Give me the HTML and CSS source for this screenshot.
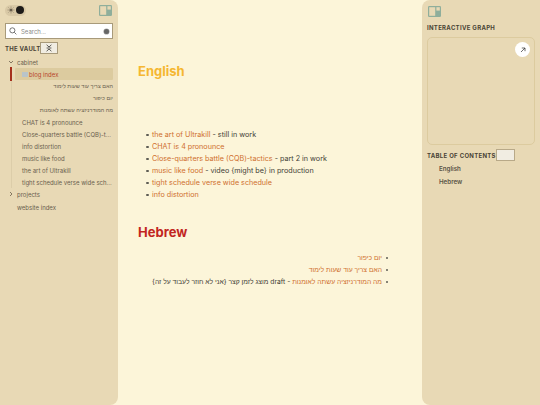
FILE: index.html
```html
<!DOCTYPE html>
<html lang="en">
<head>
<meta charset="utf-8">
<title>Blog index</title>
<link rel="stylesheet" href="styles.css">
</head>
<body>
<div class="page">
  <aside class="left">
    <div class="top-row">
      <div class="theme">
        <svg class="sun" viewBox="0 0 10 10"><circle cx="5" cy="5" r="2" fill="#6b5f4c"/><path d="M5 .8v1.2M5 8v1.2M.8 5H2M8 5h1.2M2 2l.9.9M7.1 7.1l.9.9M2 8l.9-.9M7.1 2.9 8 2" stroke="#6b5f4c" stroke-width=".8"/></svg>
        <span class="moon"></span>
      </div>
      <svg class="layout-icon" viewBox="0 0 13 11"><rect width="13" height="11" rx="1.2" fill="#8fae9b"/><rect x="1.2" y="1.2" width="6" height="8.6" fill="#e8d9b5"/><rect x="8.4" y="1.2" width="3.4" height="3.4" fill="#e8d9b5"/></svg>
    </div>
    <div class="search">
      <svg class="glass" viewBox="0 0 10 10"><circle cx="4.2" cy="4.2" r="3.2" fill="none" stroke="#444" stroke-width=".9"/><path d="m6.6 6.6 2.6 2.6" stroke="#444" stroke-width=".9"/></svg>
      <span class="placeholder">Search...</span>
      <span class="clear"></span>
    </div>
    <div class="vault-row">
      <span class="vault">THE VAULT</span>
      <span class="collapse"><svg viewBox="0 0 10 9"><path d="M2 .5 5 3.2 8 .5M2 8.5 5 5.8 8 8.5M2 4.5h6" fill="none" stroke="#222" stroke-width=".9"/></svg></span>
    </div>
    <nav class="tree">
      <div class="folder"><svg class="chev" viewBox="0 0 6 6"><path d="M1 2l2 2 2-2" fill="none" stroke="#6b5f4c" stroke-width=".8"/></svg><span>cabinet</span></div>
      <div class="children">
        <div class="active"><span class="doc"></span>blog index</div>
        <div class="item he" dir="rtl">האם צריך עוד שעות לימוד</div>
        <div class="item he" dir="rtl">יום כיפור</div>
        <div class="item he" dir="rtl">מה המודרניזציה עשתה לאומנות</div>
        <div class="item">CHAT is 4 pronounce</div>
        <div class="item">Close-quarters battle (CQB)-t...</div>
        <div class="item">info distortion</div>
        <div class="item">music like food</div>
        <div class="item">the art of Ultrakill</div>
        <div class="item">tight schedule verse wide sch...</div>
      </div>
      <div class="folder"><svg class="chev" viewBox="0 0 6 6"><path d="M2 1l2 2-2 2" fill="none" stroke="#6b5f4c" stroke-width=".8"/></svg><span>projects</span></div>
      <div class="folder plain"><span>website index</span></div>
    </nav>
  </aside>

  <main class="center">
    <h2 class="h-en">English</h2>
    <ul class="list-en">
      <li><a>the art of Ultrakill</a> - still in work</li>
      <li><a>CHAT is 4 pronounce</a></li>
      <li><a>Close-quarters battle (CQB)-tactics</a> - part 2 in work</li>
      <li><a>music like food</a> - video {might be} in production</li>
      <li><a>tight schedule verse wide schedule</a></li>
      <li><a>info distortion</a></li>
    </ul>
    <h2 class="h-he">Hebrew</h2>
    <ul class="list-he" dir="rtl">
      <li><a>יום כיפור</a></li>
      <li><a>האם צריך עוד שעות לימוד</a></li>
      <li><a>מה המודרניזציה עשתה לאומנות</a> - draft מוצג לזמן קצר {אני לא חוזר לעבוד על זה}</li>
    </ul>
  </main>

  <aside class="right">
    <svg class="layout-icon" viewBox="0 0 13 11"><rect width="13" height="11" rx="1.2" fill="#8fae9b"/><rect x="1.2" y="1.2" width="6" height="8.6" fill="#e8d9b5"/><rect x="8.4" y="1.2" width="3.4" height="3.4" fill="#e8d9b5"/></svg>
    <div class="cap graph-cap">INTERACTIVE GRAPH</div>
    <div class="graph">
      <span class="expand"><svg viewBox="0 0 10 10"><path d="M2.5 7.5 7.5 2.5M3.5 2.5h4v4" fill="none" stroke="#333" stroke-width=".9"/></svg></span>
    </div>
    <div class="toc-row">
      <span class="cap">TABLE OF CONTENTS</span>
      <span class="toc-btn"></span>
    </div>
    <div class="toc-item">English</div>
    <div class="toc-item">Hebrew</div>
  </aside>
</div>
</body>
</html>
```
FILE: styles.css
```css
* { box-sizing: border-box; }
html, body { margin: 0; height: 100%; }
body {
  background: #fcf5d9;
  font-family: Inter, "Noto Sans", "Liberation Sans", sans-serif;
  color: #3f3d36;
  overflow: hidden;
}
.page {
  display: grid;
  grid-template-columns: 118px 1fr 118px;
  height: 405px;
}
.left, .right { background: #e8d9b5; height: 405px; }
.left { border-radius: 0 8px 8px 0; padding: 5px 5px 0; }
.right { border-radius: 8px 0 0 8px; padding: 6px 5px 0; }

.top-row { display: flex; justify-content: space-between; align-items: center; height: 10px; }
.theme { display: flex; align-items: center; gap: 1px; background: #d9c9a6; border-radius: 6px; height: 11px; padding: 0 2px; }
.sun { width: 8px; height: 8px; }
.moon { width: 8px; height: 8px; border-radius: 50%; background: #1d1b18; }
.layout-icon { width: 13px; height: 11px; display: block; }
.top-row .layout-icon { margin-right: 1px; }
.right > .layout-icon { margin-left: 1px; }

.search {
  display: flex; align-items: center; height: 16px; margin-top: 8px;
  background: #fff; border: 1px solid #a89a7a; padding: 0 3px;
}
.glass { width: 8px; height: 8px; flex: none; }
.placeholder { font-size: 6px; color: #8b8a86; margin-left: 4px; flex: 1; }
.clear { width: 5px; height: 5px; border-radius: 50%; background: #666; box-shadow: 0 0 0 .6px #aaa; }

.vault-row { display: flex; align-items: center; height: 14px; margin-top: 2px; }
.vault { font-size: 6px; font-weight: 700; letter-spacing: .25px; color: #4a4436; }
.collapse {
  width: 18px; height: 12px; background: #f1ede2; border: 1px solid #a89a7a;
  display: flex; align-items: center; justify-content: center;
}
.collapse svg { width: 8px; height: 8px; }

.tree { margin-top: 1px; font-size: 6px; color: #6a604e; }
.folder { display: flex; align-items: center; height: 12px; }
.folder .chev { width: 6px; height: 6px; margin: 0 3px; }
.folder.plain { padding-left: 12px; margin-top: 1px; }
.children { margin-left: 6px; border-left: 1px solid #dccda9; }
.active {
  position: relative;
  display: flex; align-items: center; height: 12px; margin-left: 3px; padding-left: 7px;
  background: #dccb9f; color: #b8442a; border-radius: 1px;
}
.active::before {
  content: ""; position: absolute; left: -5px; top: -1px; bottom: -1px;
  width: 1.5px; background: #a5301c;
}
.doc { width: 6px; height: 5px; background: #b9c4c9; margin-right: 1px; }
.item { height: 12px; line-height: 12px; padding: 1px 0 0 10px; white-space: nowrap; }
.item.he { font-size: 5.5px; padding: 0; text-align: right; }

.center { padding: 62px 20px 0; font-size: 7.2px; }
.h-en, .h-he { margin: 0; font-size: 13px; font-weight: 700; line-height: 18px; }
.h-en { color: #f5b731; }
.h-he { color: #c2251f; margin-top: 22px; }
ul { margin: 0; list-style: none; padding: 0; }
li { height: 12px; line-height: 12px; }
li::before {
  content: ""; display: inline-block; width: 2.5px; height: 2.5px; border-radius: 50%;
  background: #5e5c54; vertical-align: middle;
}
a { color: #cf6f2e; }
.list-en { margin-top: 49px; padding-left: 8px; }
.list-en li::before { margin-right: 3.5px; }
.list-he { margin-top: 11px; padding-right: 14px; font-size: 6.75px; }
.list-he li::before { margin-left: 3.5px; }

.cap { font-size: 6px; font-weight: 700; letter-spacing: .3px; color: #4a4436; }
.graph-cap { margin-top: 7px; }
.graph {
  height: 108px; margin-top: 6px; border: 1px solid #dccb9f; border-radius: 5px;
  display: flex; justify-content: flex-end; padding: 4px;
}
.expand { width: 15px; height: 15px; border-radius: 50%; background: #fff; display: flex; align-items: center; justify-content: center; }
.expand svg { width: 8px; height: 8px; }
.toc-row { display: flex; align-items: center; margin-top: 4px; }
.toc-btn { width: 19px; height: 12px; background: #f1ede2; border: 1px solid #b8a988; }
.toc-item { font-size: 6.2px; font-weight: 600; color: #5a5446; padding-left: 12px; height: 12px; line-height: 12px; margin-top: 1px; }
.toc-row + .toc-item { margin-top: 2px; }
```
